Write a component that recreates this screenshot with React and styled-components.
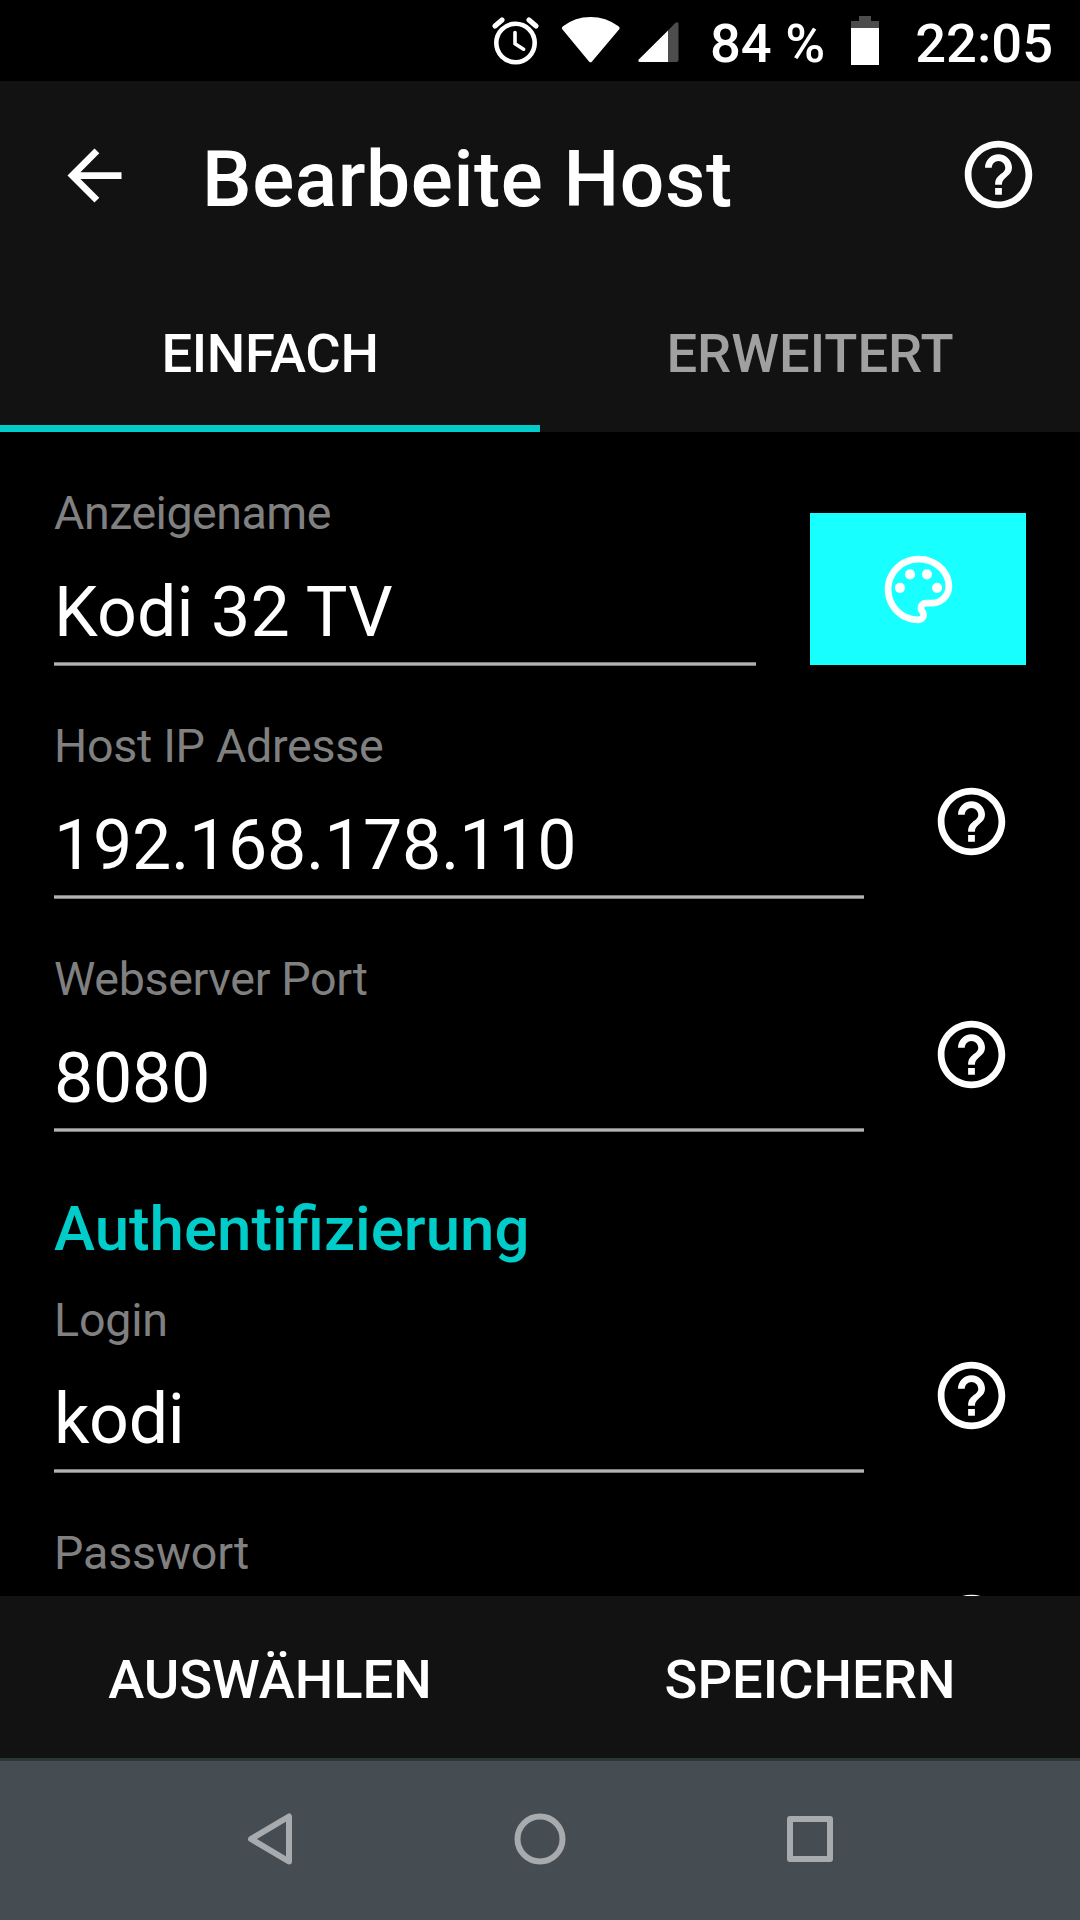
import styled, { createGlobalStyle } from "styled-components"

const GlobalStyle = createGlobalStyle`
    * {
        box-sizing: border-box;
    }

    body {
        margin: 0;
        background: #000;
        color: #fff;
        font-family: Roboto, "Noto Sans", sans-serif;
    }

    button {
        border: none;
        background: none;
        color: inherit;
        font: inherit;
        padding: 0;
    }

    svg {
        display: block;
        flex-shrink: 0;
    }
`

const Screen = styled.div`
    width: 1080px;
    height: 1920px;
    display: flex;
    flex-direction: column;
    overflow: hidden;
    background: #000;
`

const StatusBar = styled.div`
    height: 81px;
    flex-shrink: 0;
    display: flex;
    align-items: flex-start;
    padding: 12px 27px 0 492px;
    font-size: 54.3px;
    font-weight: 500;
    line-height: 64px;

    .alarm {
        margin: 5px 22px 0 0;
    }

    .wifi {
        margin: 4px 18px 0 0;
    }

    .signal {
        margin: 9px 31px 0 0;
    }

    .battery {
        margin: 4px 0 0 25px;
    }
`

const BatteryLevel = styled.span`
    width: 116px;
    white-space: nowrap;
`

const Clock = styled.span`
    margin-left: auto;
`

const Toolbar = styled.header`
    height: 189px;
    flex-shrink: 0;
    display: flex;
    align-items: center;
    padding: 0 41px 0 54px;
    background: #121212;

    h1 {
        flex: 1;
        margin: 7px 0 0 67px;
        font-size: 78.5px;
        font-weight: 500;
        letter-spacing: 0.6px;
        line-height: 92px;
    }

    .help {
        margin-bottom: 2px;
    }
`

const Tabs = styled.nav`
    height: 162px;
    flex-shrink: 0;
    display: flex;
    background: #121212;
`

const Tab = styled.button`
    flex: 1;
    padding-top: 12px;
    border-bottom: 7px solid ${({ $active }) => ($active ? "#00ccc9" : "transparent")};
    color: ${({ $active }) => ($active ? "#fff" : "#a0a0a0")};
    font-size: 54.3px;
    font-weight: 500;
    letter-spacing: ${({ $active }) => ($active ? "-0.3px" : "0")};
    line-height: 64px;
`

const Form = styled.main`
    flex: 1;
    min-height: 0;
    overflow: hidden;
    padding: 53px 54px 0;
`

const Row = styled.div`
    display: flex;
    gap: 54px;
    height: 233px;
`

const Field = styled.div`
    flex: 1;
`

const Label = styled.label`
    display: block;
    margin-bottom: 30px;
    color: #808080;
    font-size: 46.6px;
    letter-spacing: ${({ $tracking = 0 }) => $tracking}px;
    line-height: 56px;
`

const Value = styled.div`
    height: 95px;
    font-size: 69.9px;
    letter-spacing: ${({ $tracking = 0 }) => $tracking}px;
    line-height: 82px;
    /* hairline underline, softer on its outer edges */
    background: linear-gradient(#7c7c7c 0 1px, #b3b3b3 1px 3px, #7c7c7c 3px 4px) 0 100% / 100% 4px no-repeat;
`

const HelpButton = styled.button`
    width: 108px;
    height: 81px;
    margin-top: 63px;
    padding-left: 13px;
    display: flex;
`

const ColorButton = styled.button`
    width: 216px;
    height: 152px;
    margin-top: 28px;
    display: flex;
    align-items: center;
    justify-content: center;
    background: #18ffff;
`

const SectionTitle = styled.h2`
    margin: 0;
    height: 108px;
    padding-top: 8px;
    color: #00ccc9;
    font-size: 61.8px;
    font-weight: 500;
    line-height: 74px;
`

const Actions = styled.footer`
    height: 162px;
    flex-shrink: 0;
    display: flex;
    background: #121212;

    button {
        flex: 1;
        padding-top: 5px;
        font-size: 54.3px;
        font-weight: 500;
        line-height: 64px;
    }
`

const NavBar = styled.div`
    height: 162px;
    flex-shrink: 0;
    display: flex;
    align-items: center;
    justify-content: center;
    gap: 210px;
    padding-bottom: 3px;
    background: #454c52;
    border-top: 3px solid #2e3637;
`

const HelpIcon = () => (
    <svg className="help" width="81" height="81" viewBox="0 0 24 24" fill="#fff">
        <path d="M11 18h2v-2h-2v2zm1-16C6.48 2 2 6.48 2 12s4.48 10 10 10 10-4.48 10-10S17.52 2 12 2zm0 18c-4.41 0-8-3.59-8-8s3.59-8 8-8 8 3.59 8 8-3.59 8-8 8zm0-14c-2.21 0-4 1.79-4 4h2c0-1.1.9-2 2-2s2 .9 2 2c0 2-3 1.75-3 5h2c0-2.25 3-2.5 3-5 0-2.21-1.79-4-4-4z" />
    </svg>
)

const BackIcon = () => (
    <svg width="81" height="81" viewBox="0 0 24 24" fill="#fff">
        <path d="M20 11H7.83l5.59-5.59L12 4l-8 8 8 8 1.41-1.41L7.83 13H20v-2z" />
    </svg>
)

const PaletteIcon = () => (
    <svg width="81" height="81" viewBox="0 0 24 24" fill="#fff">
        <path d="M12 22C6.49 22 2 17.51 2 12S6.49 2 12 2s10 4.04 10 9c0 3.31-2.69 6-6 6h-1.77c-.28 0-.5.22-.5.5 0 .12.05.23.13.33.41.47.64 1.06.64 1.67A2.5 2.5 0 0 1 12 22zm0-18c-4.41 0-8 3.59-8 8s3.59 8 8 8c.28 0 .5-.22.5-.5a.54.54 0 0 0-.14-.35c-.41-.46-.63-1.05-.63-1.65a2.5 2.5 0 0 1 2.5-2.5H16c2.21 0 4-1.79 4-4 0-3.86-3.59-7-8-7z" />
        <circle cx="6.5" cy="11.5" r="1.5" />
        <circle cx="9.5" cy="7.5" r="1.5" />
        <circle cx="14.5" cy="7.5" r="1.5" />
        <circle cx="17.5" cy="11.5" r="1.5" />
    </svg>
)

const AlarmIcon = () => (
    <svg className="alarm" width="47" height="48" viewBox="0 0 47 48" fill="none" stroke="#fff">
        <circle cx="23.5" cy="26" r="19.2" strokeWidth="4.6" />
        <path d="M3 9 10 3M44 9 37 3" strokeWidth="5" strokeLinecap="round" />
        <path d="M23 15.500v11.300l8.600 5.400" strokeWidth="3.600" strokeLinecap="round" strokeLinejoin="round" />
    </svg>
)

const WifiIcon = () => (
    <svg className="wifi" width="59" height="47" viewBox="0 0 59 47" fill="#fff">
        <path d="M1.500 13.600Q0 11.700 2 10.200Q14 .9 29.500 .9T57.500 10.200Q59.500 11.700 58 13.600L31 45.500Q29.500 47.200 28 45.500Z" />
    </svg>
)

const SignalIcon = () => (
    <svg className="signal" width="41" height="42" viewBox="0 0 41 42">
        <path d="M30 9.500 37.500 1.800Q40.500 0 40.500 3V39Q40.500 41 38.500 41H30Z" fill="#4d4d4d" />
        <path d="M30 9.500V41H2.200Q-.8 41 1 38.300Z" fill="#fff" />
    </svg>
)

const BatteryIcon = () => (
    <svg className="battery" width="28" height="49" viewBox="0 0 28 49">
        <path d="M8 0h12v5h8v7H0V5h8z" fill="#4d4d4d" />
        <path d="M0 12h28v37H0z" fill="#fff" />
    </svg>
)

const NavIcon = ({ children }) => (
    <svg width="60" height="60" viewBox="0 0 60 60" fill="none" stroke="#a8abad" strokeWidth="6" strokeLinejoin="round">
        {children}
    </svg>
)

const InputRow = ({ label, value, labelTracking, valueTracking, children }) => (
    <Row>
        <Field>
            <Label $tracking={labelTracking}>{label}</Label>
            <Value $tracking={valueTracking}>{value}</Value>
        </Field>
        {children || (
            <HelpButton>
                <HelpIcon />
            </HelpButton>
        )}
    </Row>
)

export default function App() {
    return (
        <>
            <GlobalStyle />
            <Screen>
                <StatusBar>
                    <AlarmIcon />
                    <WifiIcon />
                    <SignalIcon />
                    <BatteryLevel>84 %</BatteryLevel>
                    <BatteryIcon />
                    <Clock>22:05</Clock>
                </StatusBar>
                <Toolbar>
                    <BackIcon />
                    <h1>Bearbeite Host</h1>
                    <HelpIcon />
                </Toolbar>
                <Tabs>
                    <Tab $active>EINFACH</Tab>
                    <Tab>ERWEITERT</Tab>
                </Tabs>
                <Form>
                    <InputRow label="Anzeigename" value="Kodi 32 TV" labelTracking={-0.5} valueTracking={0.1}>
                        <ColorButton>
                            <PaletteIcon />
                        </ColorButton>
                    </InputRow>
                    <InputRow label="Host IP Adresse" value="192.168.178.110" labelTracking={-0.29} valueTracking={-0.3} />
                    <InputRow label="Webserver Port" value="8080" labelTracking={-0.35} valueTracking={-0.3} />
                    <SectionTitle>Authentifizierung</SectionTitle>
                    <InputRow label="Login" value="kodi" labelTracking={-0.2} valueTracking={-0.3} />
                    <InputRow label="Passwort" value="" labelTracking={-0.15} />
                </Form>
                <Actions>
                    <button>AUSWÄHLEN</button>
                    <button>SPEICHERN</button>
                </Actions>
                <NavBar>
                    <NavIcon>
                        <path d="M11 30 49 7.500v45z" />
                    </NavIcon>
                    <NavIcon>
                        <circle cx="30" cy="30" r="22.500" />
                    </NavIcon>
                    <NavIcon>
                        <rect x="10" y="10" width="40" height="40" />
                    </NavIcon>
                </NavBar>
            </Screen>
        </>
    )
}
